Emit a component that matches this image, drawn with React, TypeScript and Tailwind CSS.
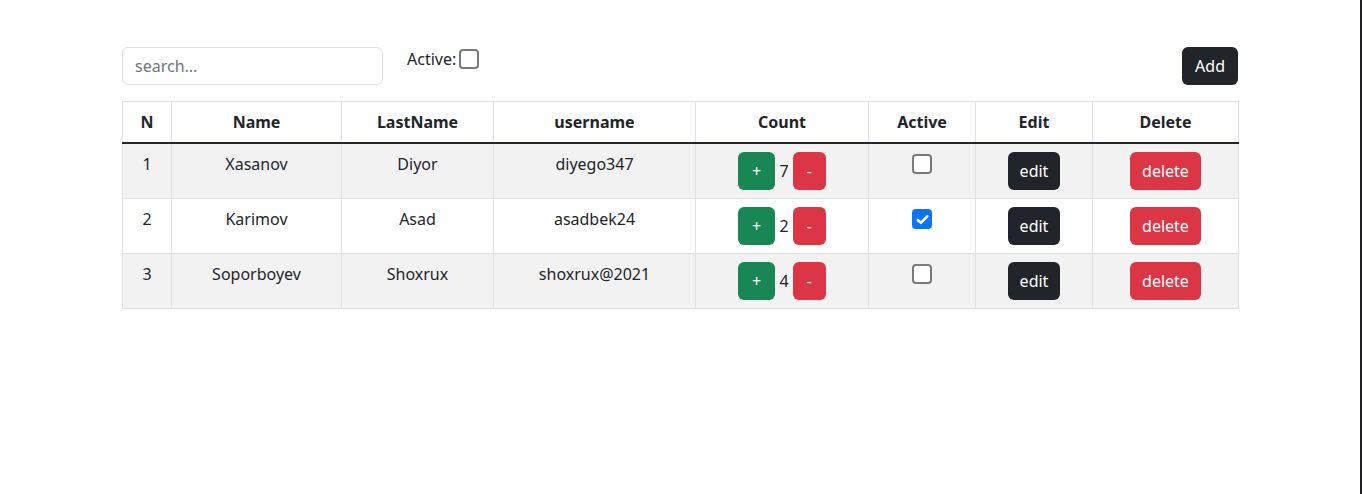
import { useState } from "react";

type Person = {
  id: number;
  name: string;
  lastName: string;
  username: string;
  count: number;
  active: boolean;
};

const initialPeople: Person[] = [
  { id: 1, name: "Xasanov", lastName: "Diyor", username: "diyego347", count: 7, active: false },
  { id: 2, name: "Karimov", lastName: "Asad", username: "asadbek24", count: 2, active: true },
  { id: 3, name: "Soporboyev", lastName: "Shoxrux", username: "shoxrux@2021", count: 4, active: false },
];

const Checkbox = ({
  checked,
  onChange,
}: {
  checked: boolean;
  onChange: () => void;
}) => (
  <button
    type="button"
    onClick={onChange}
    className={
      checked
        ? "flex h-[20px] w-[20px] items-center justify-center rounded-[4px] bg-[#0b75f6]"
        : "h-[20px] w-[20px] rounded-[4px] border-2 border-[#7a7a7a] bg-white"
    }
  >
    {checked && (
      <svg viewBox="0 0 16 16" className="h-[15px] w-[15px]">
        <path
          d="M3 8.5 6.3 11.6 13 4.6"
          fill="none"
          stroke="white"
          strokeWidth="2.8"
          strokeLinecap="round"
          strokeLinejoin="round"
        />
      </svg>
    )}
  </button>
);

const columns = [
  { title: "N", width: "w-[49px]" },
  { title: "Name", width: "w-[170px]" },
  { title: "LastName", width: "w-[152px]" },
  { title: "username", width: "w-[202px]" },
  { title: "Count", width: "w-[173px]" },
  { title: "Active", width: "w-[107px]" },
  { title: "Edit", width: "w-[117px]" },
  { title: "Delete", width: "w-[146px]" },
];

export default function App() {
  const [people, setPeople] = useState(initialPeople);
  const [onlyActive, setOnlyActive] = useState(false);
  const [search, setSearch] = useState("");

  const update = (id: number, patch: Partial<Person>) =>
    setPeople((list) => list.map((p) => (p.id === id ? { ...p, ...patch } : p)));

  const cell = "border border-[#dee2e6] px-2 py-2 align-top";

  return (
    <div
      className="flex h-[494px] w-full bg-white text-base leading-6 text-[#212529]"
      style={{ fontFamily: '"Noto Sans", "Open Sans", sans-serif' }}
    >
      <div className="flex-1">
        <div className="mx-auto mt-[47px] w-[1116px]">
          <div className="flex items-start">
            <input
              value={search}
              onChange={(e) => setSearch(e.target.value)}
              placeholder="search..."
              className="h-[38px] w-[261px] rounded-md border border-[#dee2e6] px-3 text-base outline-none placeholder:text-[#6c757d]"
            />
            <label className="ml-6 flex items-start gap-[3px]">
              <span>Active:</span>
              <span className="mt-[2px]">
                <Checkbox checked={onlyActive} onChange={() => setOnlyActive(!onlyActive)} />
              </span>
            </label>
            <button className="ml-auto h-[38px] rounded-md bg-[#212529] px-[13px] text-white">
              Add
            </button>
          </div>

          <table className="mt-4 w-full table-fixed border-collapse text-center">
            <thead>
              <tr>
                {columns.map((c) => (
                  <th key={c.title} className={`${cell} ${c.width} border-b-2 border-b-[#212529] font-bold`}>
                    {c.title}
                  </th>
                ))}
              </tr>
            </thead>
            <tbody>
              {people.map((p, i) => (
                <tr key={p.id} className={i % 2 === 0 ? "bg-[#f2f2f2]" : "bg-white"}>
                  <td className={cell}>{p.id}</td>
                  <td className={cell}>{p.name}</td>
                  <td className={cell}>{p.lastName}</td>
                  <td className={cell}>{p.username}</td>
                  <td className={cell}>
                    <button
                      onClick={() => update(p.id, { count: p.count + 1 })}
                      className="h-[38px] rounded-md bg-[#198754] px-[14px] text-white"
                    >
                      +
                    </button>{" "}
                    {p.count}{" "}
                    <button
                      onClick={() => update(p.id, { count: p.count - 1 })}
                      className="h-[38px] rounded-md bg-[#dc3545] px-[14px] text-white"
                    >
                      -
                    </button>
                  </td>
                  <td className={cell}>
                    <div className="mt-[2px] flex justify-center">
                      <Checkbox checked={p.active} onChange={() => update(p.id, { active: !p.active })} />
                    </div>
                  </td>
                  <td className={cell}>
                    <button className="h-[38px] rounded-md bg-[#212529] px-3 text-white">edit</button>
                  </td>
                  <td className={cell}>
                    <button className="h-[38px] rounded-md bg-[#dc3545] px-3 text-white">delete</button>
                  </td>
                </tr>
              ))}
            </tbody>
          </table>
        </div>
      </div>
      <div className="w-[2px] bg-[#1f1f24]" />
    </div>
  );
}
